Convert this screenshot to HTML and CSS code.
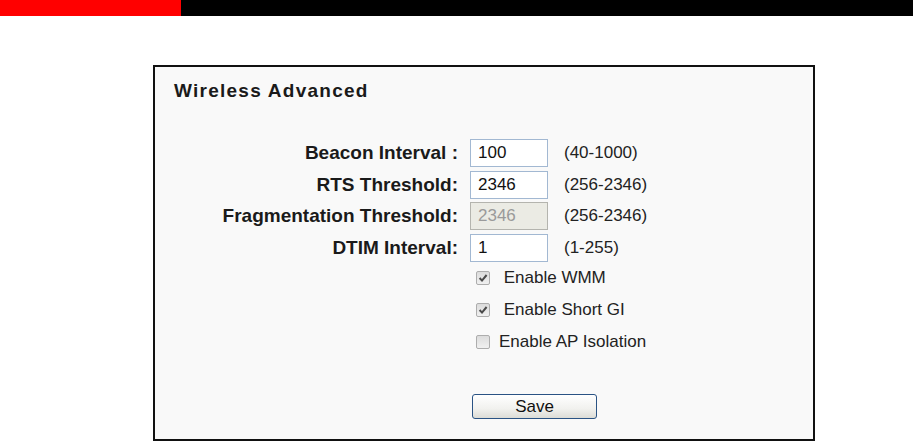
FILE: index.html
```html
<!DOCTYPE html>
<html>
<head>
    <meta charset="UTF-8">
    <link rel="stylesheet" href="styles.css">
</head>
<body>
    <!-- 顶部条 -->
    <div class="topbar">
        <span class="red"></span>
        <span class="black"></span>
    </div>
    <div class="panel">
        <p class="title">Wireless Advanced</p>
        <div class="form">
            <span class="label">Beacon Interval :</span>
            <span class="field">100</span>
            <span class="hint">(40-1000)</span>

            <span class="label">RTS Threshold:</span>
            <span class="field">2346</span>
            <span class="hint">(256-2346)</span>

            <span class="label">Fragmentation Threshold:</span>
            <span class="field disabled">2346</span>
            <span class="hint">(256-2346)</span>

            <span class="label">DTIM Interval:</span>
            <span class="field">1</span>
            <span class="hint">(1-255)</span>
        </div>
        <div class="checks">
            <p class="check-row">
                <span class="box on"><svg width="10" height="10" viewBox="0 0 10 10"><path d="M1.6 5 L4 7.6 L8.6 2" fill="none" stroke="#4a4a4a" stroke-width="2"/></svg></span>
                <span class="check-text">&nbsp;Enable WMM</span>
            </p>
            <p class="check-row">
                <span class="box on"><svg width="10" height="10" viewBox="0 0 10 10"><path d="M1.6 5 L4 7.6 L8.6 2" fill="none" stroke="#4a4a4a" stroke-width="2"/></svg></span>
                <span class="check-text">&nbsp;Enable Short GI</span>
            </p>
            <p class="check-row">
                <span class="box"></span>
                <span class="check-text">Enable AP Isolation</span>
            </p>
        </div>
        <div class="actions">
            <span class="btn">Save</span>
        </div>
    </div>
</body>
</html>
```

FILE: styles.css
```css
body,span,p,div{margin: 0;padding: 0;}
body{
    width: 914px;height: 441px;overflow: hidden;
    background: #fff;color: #1a1a1a;
    font-family: "Liberation Sans", Arial, sans-serif;font-size: 17px;
}

.topbar{display: flex;height: 16px;}
.topbar .red{width: 181px;background: #ff0000;}
.topbar .black{width: 732px;background: #000;}

.panel{
    width: 662px;height: 376px;margin: 49px 0 0 153px;
    box-sizing: border-box;border: 2px solid #111;
    background: #f9f9f9;
    padding: 12px 0 0 19px;
}
.title{font-size: 19px;font-weight: bold;letter-spacing: 1.25px;line-height: 23px;}

.form{
    display: grid;
    grid-template-columns: 284px 78px auto;
    grid-auto-rows: 28px;
    column-gap: 12px;row-gap: 3.7px;
    align-items: center;
    margin-top: 37px;
}
.label{font-weight: bold;font-size: 19px;text-align: right;white-space: nowrap;}
.field{
    height: 28px;line-height: 26px;box-sizing: border-box;
    border: 1px solid #a2b8d2;background: #fff;
    padding-left: 7px;color: #111;
}
.field.disabled{background: #ebebe4;border-color: #b4b4ae;color: #9a9a9a;}
.hint{margin-left: 4px;color: #222;}

.checks{margin: 0 0 0 302px;}
.check-row{display: flex;align-items: center;height: 32px;}
.box{
    width: 12px;height: 12px;border: 1px solid #adadad;border-radius: 2px;
    background: linear-gradient(#dcdcdc, #f0f0f0);
    display: flex;align-items: center;justify-content: center;
}
.check-text{margin-left: 9px;color: #222;}

.actions{margin: 36px 0 0 298px;}
.btn{
    display: block;width: 125px;height: 25px;box-sizing: border-box;
    border: 1px solid #2a5384;border-radius: 3px;
    background: linear-gradient(#ffffff, #f1f1ee 60%, #dcdcd6);
    text-align: center;line-height: 23px;color: #111;
}
```
